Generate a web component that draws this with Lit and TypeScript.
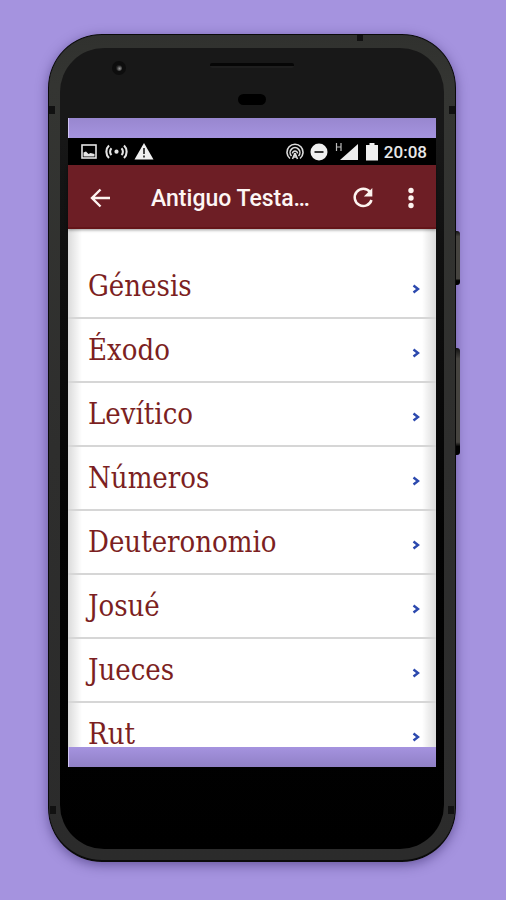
import { LitElement, html, css, svg } from "lit";
import { customElement, property } from "lit/decorators.js";

const BOOKS = [
  "Génesis",
  "Éxodo",
  "Levítico",
  "Números",
  "Deuteronomio",
  "Josué",
  "Jueces",
  "Rut",
];

const leftIcons = svg`
  <g fill="none" stroke="#e4e4e4" stroke-width="1.6">
    <rect x="1" y="2" width="14" height="13"></rect>
    <path d="M30.500 5.300a4.800 4.800 0 0 0 0 6.800M40.500 5.300a4.800 4.800 0 0 1 0 6.800M28 2.500a8.600 8.600 0 0 0 0 12.400M43 2.500a8.600 8.600 0 0 1 0 12.400" stroke-width="2.100"></path>
  </g>
  <path d="M2.500 13.500V9.500l2.500-1 2.500 2.500 2-1 4 1v2.500z" fill="#e4e4e4"></path>
  <circle cx="35.500" cy="8.700" r="2.100" fill="#e4e4e4"></circle>
  <path d="M63 0l9.500 16.500h-19z" fill="#f0f0f0"></path>
  <path d="M63 5v6M63 12.500v2" stroke="#444" stroke-width="2"></path>`;

const rightIcons = svg`
  <g fill="none" stroke="#dcdcdc" stroke-width="1.600">
    <path d="M4 15.500A8 8 0 1 1 14 15.500M5.500 13A4.900 4.900 0 1 1 12.500 13"></path>
    <path d="M6.500 10.500A2.500 2.500 0 1 1 11.500 10.500M9 10l-2.500 6M9 10l2.500 6M7 14h4"></path>
  </g>
  <circle cx="33" cy="9" r="8.500" fill="#f0f0f0"></circle>
  <path d="M28.500 9h9" stroke="#222" stroke-width="1.800"></path>
  <path d="M50.500 0v8M55 0v8M50.500 4h4.500" stroke="#bbb" stroke-width="1.200" fill="none"></path>
  <path d="M72 1v16H54z" fill="#eee"></path>
  <path d="M80 2h3.500V0h5v2H92v15.500H80z" fill="#f0f0f0"></path>`;

@customElement("book-row")
class BookRow extends LitElement {
  @property() name = "";

  static styles = css`
    :host {
      display: block;
    }
    .row {
      display: flex;
      align-items: center;
      justify-content: space-between;
      box-sizing: border-box;
      height: 64px;
      padding: 0 16px 0 20px;
      border-bottom: 2px solid #d6d6d6;
      color: #7c1f22;
      font: 29px/26px "DejaVu Serif Condensed", "DejaVu Serif", serif;
      text-decoration: none;
    }
    .chevron {
      width: 8px;
      height: 10px;
      margin-top: 6px;
      fill: none;
      stroke: #2c49ae;
      stroke-width: 2.4;
    }
  `;

  render() {
    return html`<a class="row" href="#">
      <span>${this.name}</span>
      <svg class="chevron" viewBox="0 0 8 10" aria-hidden="true"><path d="M1.500 1.500L6 5 1.500 8.500"></path></svg>
    </a>`;
  }
}

@customElement("app-root")
class AppRoot extends LitElement {
  static styles = css`
    :host {
      display: flex;
      box-sizing: border-box;
      height: 100vh;
      min-height: 480px;
      padding: 34px 50px 38px 48px;
      background: #a593df;
      font-family: Roboto, sans-serif;
    }
    .phone {
      position: relative;
      flex: 1;
      min-width: 0;
      display: flex;
      box-sizing: border-box;
      padding: 13px 11px 11px;
      border: 1px solid #0a0a0a;
      border-bottom-width: 2px;
      border-radius: 54px;
      background: linear-gradient(#30312e, #343532 6%, #2e2e2d 50%, #2b2b2b);
      box-shadow: 0 3px 12px rgba(40, 25, 90, 0.5);
    }
    .side {
      position: absolute;
      right: -5px;
      width: 4px;
      border-radius: 0 3px 3px 0;
      background: linear-gradient(#111, #45433f 10%, #45433f 88%, #000 92%);
    }
    .power {
      top: 196px;
      height: 54px;
    }
    .volume {
      top: 313px;
      height: 107px;
    }
    .band {
      position: absolute;
      width: 6px;
      height: 8px;
      background: #111;
    }
    .band.tl {
      top: 71px;
      left: 0;
    }
    .band.tr {
      top: 71px;
      right: 0;
    }
    .band.bl {
      bottom: 46px;
      left: 1px;
    }
    .band.br {
      bottom: 46px;
      right: 1px;
    }
    .band.top {
      top: 0;
      right: 92px;
      height: 6px;
    }
    .face {
      flex: 1;
      min-width: 0;
      display: flex;
      flex-direction: column;
      padding: 0 8px;
      border-radius: 44px;
      background: linear-gradient(#181818 10%, #101010 25%, #030303 60%, #000);
    }
    .forehead {
      display: grid;
      grid-template-columns: 1fr 84px 1fr;
      flex: none;
      height: 70px;
    }
    .camera {
      width: 6px;
      height: 6px;
      margin: 13px 0 0 44px;
      border: 4px solid #0d0d0d;
      border-radius: 50%;
      background: radial-gradient(circle at 60% 60%, #999, #222 60%);
    }
    .speaker {
      display: flex;
      flex-direction: column;
      align-items: center;
      gap: 26px;
      padding-top: 15px;
    }
    .slot {
      width: 84px;
      height: 5px;
      border-top: 3px solid #060606;
      border-radius: 2px;
      box-sizing: border-box;
      background: #1e1e1e;
    }
    .sensor {
      width: 28px;
      height: 11px;
      border-radius: 6px;
      background: #000;
    }
    .screen {
      flex: 1;
      min-height: 0;
      display: flex;
      flex-direction: column;
    }
    .strip {
      flex: none;
      height: 20px;
      background: linear-gradient(#9887cf, #a593df);
      box-shadow: inset 1px 0 #d0c4f4;
    }
    .strip.bottom {
      background: linear-gradient(#a593df, #9080c6);
    }
    .status {
      flex: none;
      display: flex;
      align-items: center;
      height: 27px;
      padding: 0 9px 0 13px;
      background: #000;
      color: #e8e8e8;
      font-size: 17px;
      font-weight: 500;
      line-height: 20px;
    }
    .left {
      width: 74px;
      height: 18px;
      margin-right: auto;
    }
    .right {
      width: 94px;
      height: 18px;
      margin-right: 4px;
    }
    .bar {
      flex: none;
      display: flex;
      align-items: center;
      height: 64px;
      box-sizing: border-box;
      padding: 2px 12px 0 20px;
      background: #6d1e25;
      box-shadow: inset 0 -2px #641519, 0 1px 3px rgba(0, 0, 0, 0.4);
      z-index: 1;
    }
    .bar button {
      display: flex;
      flex: none;
      padding: 0;
      border: 0;
      background: none;
      color: #fdf4f0;
    }
    .title {
      flex: 1;
      margin: 0 0 0 38px;
      padding-top: 2px;
      color: #fdf6f4;
      font-size: 23px;
      font-weight: 500;
      line-height: 28px;
      white-space: nowrap;
    }
    .bar .refresh {
      margin-right: 22px;
    }
    .books {
      flex: 1;
      min-height: 0;
      overflow-y: auto;
      scrollbar-width: none;
      padding-top: 26px;
      background:
        linear-gradient(90deg, rgba(0, 0, 0, 0.14), transparent 14px, transparent calc(100% - 14px), rgba(0, 0, 0, 0.14)),
        #fff;
    }
    .chin {
      flex: none;
      height: 82px;
    }
  `;

  render() {
    return html`
      <div class="phone">
        <span class="side power"></span>
        <span class="side volume"></span>
        <span class="band tl"></span>
        <span class="band tr"></span>
        <span class="band bl"></span>
        <span class="band br"></span>
        <span class="band top"></span>
        <div class="face">
          <div class="forehead">
            <span class="camera"></span>
            <div class="speaker">
              <span class="slot"></span>
              <span class="sensor"></span>
            </div>
          </div>
          <main class="screen">
            <div class="strip"></div>
            <div class="status">
              <svg class="left" viewBox="0 0 74 18" aria-hidden="true">${leftIcons}</svg>
              <svg class="right" viewBox="0 0 94 18" aria-hidden="true">${rightIcons}</svg>
              <span>20:08</span>
            </div>
            <header class="bar">
              <button aria-label="Atrás">
                <svg width="25" height="24" viewBox="0 0 25 24" fill="none" stroke="currentColor" stroke-width="2.400">
                  <path d="M22 12H4.500M12.500 3.500L4 12l8.500 8.500"></path>
                </svg>
              </button>
              <h1 class="title">Antiguo Testa…</h1>
              <button class="refresh" aria-label="Actualizar">
                <svg width="26" height="26" viewBox="0 0 26 26">
                  <path d="M20 7A8.600 8.600 0 1 0 21.500 15" fill="none" stroke="currentColor" stroke-width="2.500"></path>
                  <path d="M22.300 3v8.500h-8.500z" fill="currentColor"></path>
                </svg>
              </button>
              <button aria-label="Más opciones">
                <svg width="26" height="24" viewBox="0 0 26 24" fill="currentColor">
                  <circle cx="13" cy="4.500" r="2.700"></circle>
                  <circle cx="13" cy="12" r="2.700"></circle>
                  <circle cx="13" cy="19.500" r="2.700"></circle>
                </svg>
              </button>
            </header>
            <nav class="books" aria-label="Libros">
              ${BOOKS.map((name) => html`<book-row .name=${name}></book-row>`)}
            </nav>
            <div class="strip bottom"></div>
          </main>
          <div class="chin"></div>
        </div>
      </div>
    `;
  }
}
